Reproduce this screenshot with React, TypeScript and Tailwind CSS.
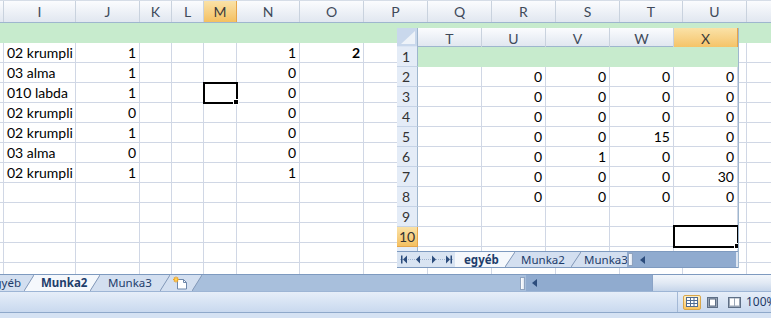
import React from "react";

type BgRow = { i?: string; j?: string; n?: string; o?: string };
const BG_HEAD = ["", "I", "J", "K", "L", "M", "N", "O", "P", "Q", "R", "S", "T", "U", ""];
const BG_ROWS: BgRow[] = [
  { i: "02 krumpli", j: "1", n: "1", o: "2" },
  { i: "03 alma", j: "1", n: "0" },
  { i: "010 labda", j: "1", n: "0" },
  { i: "02 krumpli", j: "0", n: "0" },
  { i: "02 krumpli", j: "1", n: "0" },
  { i: "03 alma", j: "0", n: "0" },
  { i: "02 krumpli", j: "1", n: "1" },
  {},
  {},
  {},
  {},
  {},
];

const FG_HEAD = ["T", "U", "V", "W", "X"];
const FG_ROWS: string[][] = [
  ["", "0", "0", "0", "0"],
  ["", "0", "0", "0", "0"],
  ["", "0", "0", "0", "0"],
  ["", "0", "0", "15", "0"],
  ["", "0", "1", "0", "0"],
  ["", "0", "0", "0", "30"],
  ["", "0", "0", "0", "0"],
  ["", "", "", "", ""],
  ["", "", "", "", ""],
];

function Slant({ h, left, right }: { h: number; left: string; right: string }) {
  return (
    <svg width="10" height={h} className="block shrink-0">
      <polygon points={`0,0 10,0 0,${h}`} fill={left} />
      <polygon points={`10,0 10,${h} 0,${h}`} fill={right} />
      <line x1="0" y1={h} x2="10" y2="0" stroke="#8499b8" strokeWidth="1" />
    </svg>
  );
}

function LeftArrow({ color = "#2c4c7c" }: { color?: string }) {
  return (
    <svg width="5" height="8" viewBox="0 0 5 8" className="block">
      <polygon points="5,0 5,8 0,4" fill={color} />
    </svg>
  );
}

function NavButtons() {
  return (
    <div className="flex h-full w-[58px] items-center bg-[#d9e4f2] pl-[3px]">
      <svg width="54" height="9" viewBox="0 0 54 9" className="block">
        <line x1="0" y1="4.5" x2="54" y2="4.5" stroke="#9fb3cf" strokeDasharray="1 1" />
        <rect x="1" y="0.5" width="1.5" height="8" fill="#2c4c7c" />
        <polygon points="7,0.5 7,8.5 3,4.5" fill="#2c4c7c" />
        <polygon points="20,0.5 20,8.5 16,4.5" fill="#2c4c7c" />
        <polygon points="32,0.5 32,8.5 36,4.5" fill="#2c4c7c" />
        <polygon points="46,0.5 46,8.5 50,4.5" fill="#2c4c7c" />
        <rect x="50.5" y="0.5" width="1.5" height="8" fill="#2c4c7c" />
      </svg>
    </div>
  );
}

function InsertSheetIcon() {
  return (
    <svg width="17" height="14" viewBox="0 0 17 14" className="block">
      <path d="M5.5 3.5h6l3 3v6.5h-9z" fill="#ffffff" stroke="#6f88ab" />
      <path d="M11.5 3.5v3h3" fill="none" stroke="#6f88ab" />
      <g stroke="#f2a31c" strokeWidth="1.2">
        <line x1="4" y1="0.5" x2="4" y2="6.5" />
        <line x1="1" y1="3.5" x2="7" y2="3.5" />
        <line x1="2" y1="1.5" x2="6" y2="5.5" />
        <line x1="6" y1="1.5" x2="2" y2="5.5" />
      </g>
      <circle cx="4" cy="3.5" r="1.3" fill="#ffd75a" />
    </svg>
  );
}

function Splitter() {
  return (
    <div className="flex h-full w-[7px] shrink-0 items-center justify-center">
      <div className="h-[13px] w-[5px] border border-[#8fa3bf] bg-linear-to-r from-[#ffffff] to-[#dfe7f2]" />
    </div>
  );
}

export default function App() {
  return (
    <div className="relative h-[318px] w-[771px] overflow-hidden bg-white text-black [font-family:Lato,'Liberation_Sans',sans-serif]">
      <div className="flex h-full flex-col">
        {/* background column headers */}
        <div className="grid h-[23px] w-[811px] shrink-0 grid-cols-[4px_72px_64px_32px_32px_33px_63px_64px_64px_64px_64px_64px_63px_64px_64px] border-t border-b border-t-[#d6dde7] border-b-[#9eb6ce] bg-linear-to-b from-[#fbfcfe] to-[#e1e7f0]">
          {BG_HEAD.map((h, idx) =>
            h === "M" ? (
              <div
                key={idx}
                className="flex items-center justify-center border-r border-[#e6a54a] bg-linear-to-b from-[#fae2a7] to-[#f4c060] text-[14px] text-[#3b3b3b]"
              >
                {h}
              </div>
            ) : (
              <div
                key={idx}
                className="flex items-center justify-center border-r border-[#c9d2de] text-[14px] text-[#3f4a5a]"
              >
                {h}
              </div>
            )
          )}
        </div>

        {/* background grid */}
        <div className="h-[251px] shrink-0 overflow-hidden">
          <div className="h-[20px] w-[811px] bg-[#c7ebcd]" />
          {BG_ROWS.map((r, ri) => (
            <div
              key={ri}
              className="grid h-[20px] w-[811px] grid-cols-[4px_72px_64px_32px_32px_33px_63px_64px_64px_64px_64px_64px_63px_64px_64px] text-[14px] leading-none"
            >
              {BG_HEAD.map((_, ci) => {
                let content: React.ReactNode = null;
                let cls = "flex items-center border-r border-b border-[#d0d7e5]";
                if (ci === 1) {
                  content = r.i;
                  cls += " pl-[3px] whitespace-nowrap";
                } else if (ci === 2) {
                  content = r.j;
                  cls += " justify-end pr-[3px]";
                } else if (ci === 6) {
                  content = r.n;
                  cls += " justify-end pr-[3px]";
                } else if (ci === 7) {
                  content = r.o;
                  cls += " justify-end pr-[3px] font-bold";
                }
                return (
                  <div key={ci} className={cls}>
                    {content}
                  </div>
                );
              })}
            </div>
          ))}
        </div>

        {/* background sheet tab bar + horizontal scrollbar */}
        <div className="flex h-[17px] shrink-0 border-t border-[#7e9abf] bg-[#a8bfdc] text-[11.5px] text-[#1e3d6b] [font-family:'Noto_Sans',sans-serif]">
          <div className="flex h-full w-[24px] shrink-0 items-center justify-end overflow-hidden bg-[#d3dff0]">
            <span className="whitespace-nowrap pr-[3px]">egyéb</span>
          </div>
          <Slant h={16} left="#d3dff0" right="#f5f8fc" />
          <div className="flex h-full w-[56px] shrink-0 items-center bg-[#f5f8fc] pl-[7px] font-bold">Munka2</div>
          <Slant h={16} left="#f5f8fc" right="#d3dff0" />
          <div className="flex h-full w-[60px] shrink-0 items-center bg-[#d3dff0] pl-[8px]">Munka3</div>
          <Slant h={16} left="#d3dff0" right="#d3dff0" />
          <div className="flex h-full w-[22px] shrink-0 items-center bg-[#d3dff0] pl-[2px]">
            <InsertSheetIcon />
          </div>
          <Slant h={16} left="#d3dff0" right="#a8bfdc" />
          <div className="h-full w-[317px] shrink-0" />
          <Splitter />
          <div className="flex h-full w-[126px] shrink-0 items-center bg-[#90abcf] pl-[6px]">
            <LeftArrow />
          </div>
          <div className="h-full w-[119px] shrink-0 border-l border-[#8aa3c6] bg-linear-to-b from-[#f2f6fb] via-[#e1e9f4] to-[#c6d5ea]" />
        </div>

        {/* status bar */}
        <div className="flex h-[21px] shrink-0 items-center border-t border-[#9db5d5] bg-linear-to-b from-[#e6eef9] to-[#c9d9ef] text-[12px] text-[#1e3966] [font-family:'Noto_Sans',sans-serif]">
          <div className="w-[677px] shrink-0" />
          <div className="flex h-full shrink-0 items-center gap-[4px] border-l border-[#a4b9d6] pl-[5px]">
            <div className="flex h-[15px] w-[18px] items-center justify-center rounded-[2px] border border-[#d9a64a] bg-linear-to-b from-[#fff0c4] to-[#fac45a]">
              <svg width="12" height="10" viewBox="0 0 12 10" className="block">
                <rect x="0.5" y="0.5" width="11" height="9" fill="#ffffff" stroke="#4f6b92" />
                <path d="M4.5 0.5v9M8 0.5v9M0.5 3.5h11M0.5 6.5h11" stroke="#4f6b92" />
              </svg>
            </div>
            <div className="flex h-[15px] w-[14px] items-center justify-center">
              <svg width="11" height="11" viewBox="0 0 11 11" className="block">
                <rect x="0.5" y="0.5" width="10" height="10" fill="#9aa6b6" stroke="#5e6f86" />
                <rect x="2.5" y="2" width="6" height="7" fill="#ffffff" stroke="#5e6f86" />
              </svg>
            </div>
            <div className="ml-[3px] flex h-[15px] w-[16px] items-center justify-center">
              <svg width="13" height="11" viewBox="0 0 13 11" className="block">
                <rect x="0.5" y="0.5" width="12" height="10" fill="#9aa6b6" stroke="#5e6f86" />
                <rect x="2" y="1.5" width="4" height="7" fill="#ffffff" />
                <rect x="7" y="1.5" width="4" height="7" fill="#ffffff" />
              </svg>
            </div>
          </div>
          <div className="ml-[4px] shrink-0 whitespace-nowrap">100%</div>
        </div>

        {/* bottom strip */}
        <div className="h-[6px] shrink-0 border-t border-[#8ea8ca] bg-[#d5e2f3]" />
      </div>

      {/* selection in background window (M4) */}
      <div className="absolute left-[203px] top-[82px] h-[22px] w-[35px] border-2 border-black">
        <div className="absolute -bottom-[3px] -right-[3px] h-[6px] w-[6px] border border-white bg-black" />
      </div>

      {/* foreground window */}
      <div className="absolute left-[397px] top-[28px] flex h-[240px] w-[342px] flex-col overflow-hidden border-r border-[#9eb6ce] bg-white">
        <div className="grid h-[19px] shrink-0 grid-cols-[21px_64px_64px_64px_64px_64px] border-b border-[#9eb6ce] bg-linear-to-b from-[#fbfcfe] to-[#e1e7f0]">
          <div className="border-r border-[#9eb6ce] bg-[#dbe5f3]">
            <svg width="20" height="18" viewBox="0 0 20 18" className="block">
              <rect x="0" y="0" width="20" height="18" fill="#c9d8ec" />
              <polygon points="18,3 18,16 4,16" fill="#eef3f9" />
            </svg>
          </div>
          {FG_HEAD.map((h) =>
            h === "X" ? (
              <div
                key={h}
                className="flex items-center justify-center border-r border-[#e6a54a] bg-linear-to-b from-[#fae2a7] to-[#f4c060] text-[14px] text-[#3b3b3b]"
              >
                {h}
              </div>
            ) : (
              <div key={h} className="flex items-center justify-center border-r border-[#c9d2de] text-[14px] text-[#3f4a5a]">
                {h}
              </div>
            )
          )}
        </div>

        {/* row 1 */}
        <div className="grid h-[20px] shrink-0 grid-cols-[21px_320px] text-[14px] leading-none">
          <div className="flex items-center border-r border-b border-r-[#9eb6ce] border-b-[#c5d3e6] bg-[#e4ecf7] pl-[5px] text-[#333333]">1</div>
          <div className="bg-[#c7ebcd]" />
        </div>

        {FG_ROWS.map((r, ri) => {
          const n = ri + 2;
          return (
            <div key={ri} className="grid h-[20px] shrink-0 grid-cols-[21px_64px_64px_64px_64px_64px] text-[14px] leading-none">
              {n === 10 ? (
                <div className="flex items-center border-r border-b border-[#e6a54a] bg-linear-to-b from-[#fae2a7] to-[#f4c060] pl-[2px] text-[#333333]">
                  {n}
                </div>
              ) : (
                <div className="flex items-center border-r border-b border-r-[#9eb6ce] border-b-[#c5d3e6] bg-[#e4ecf7] pl-[5px] text-[#333333]">
                  {n}
                </div>
              )}
              {r.map((v, ci) => (
                <div key={ci} className="flex items-center justify-end border-r border-b border-[#d0d7e5] pr-[3px]">
                  {v}
                </div>
              ))}
            </div>
          );
        })}

        {/* partial row 11 */}
        <div className="grid h-[4px] shrink-0 grid-cols-[21px_64px_64px_64px_64px_64px]">
          <div className="border-r border-[#9eb6ce] bg-[#e4ecf7]" />
          <div className="border-r border-[#d0d7e5]" />
          <div className="border-r border-[#d0d7e5]" />
          <div className="border-r border-[#d0d7e5]" />
          <div className="border-r border-[#d0d7e5]" />
          <div className="border-r border-[#d0d7e5]" />
        </div>

        {/* fg tab bar */}
        <div className="flex h-[17px] shrink-0 border-t border-b border-[#7e9abf] bg-[#90abcf] text-[11.5px] text-[#1e3d6b] [font-family:'Noto_Sans',sans-serif]">
          <NavButtons />
          <div className="flex h-full w-[50px] shrink-0 items-center bg-[#f5f8fc] pl-[9px] font-bold">egyéb</div>
          <Slant h={15} left="#f5f8fc" right="#d3dff0" />
          <div className="flex h-full w-[56px] shrink-0 items-center bg-[#d3dff0] pl-[6px]">Munka2</div>
          <Slant h={15} left="#d3dff0" right="#d3dff0" />
          <div className="flex h-full w-[46px] shrink-0 items-center overflow-hidden whitespace-nowrap bg-[#d3dff0] pl-[3px]">Munka3</div>
          <Splitter />
          <div className="flex h-full flex-1 items-center pl-[6px]">
            <LeftArrow />
          </div>
          <div className="h-full w-[2px] shrink-0 bg-[#dfe7f2]" />
        </div>

        {/* selection X10 */}
        <div className="absolute left-[276px] top-[197px] h-[23px] w-[66px] border-2 border-black">
          <div className="absolute -bottom-[3px] -right-[3px] h-[6px] w-[6px] border border-white bg-black" />
        </div>
      </div>
    </div>
  );
}
